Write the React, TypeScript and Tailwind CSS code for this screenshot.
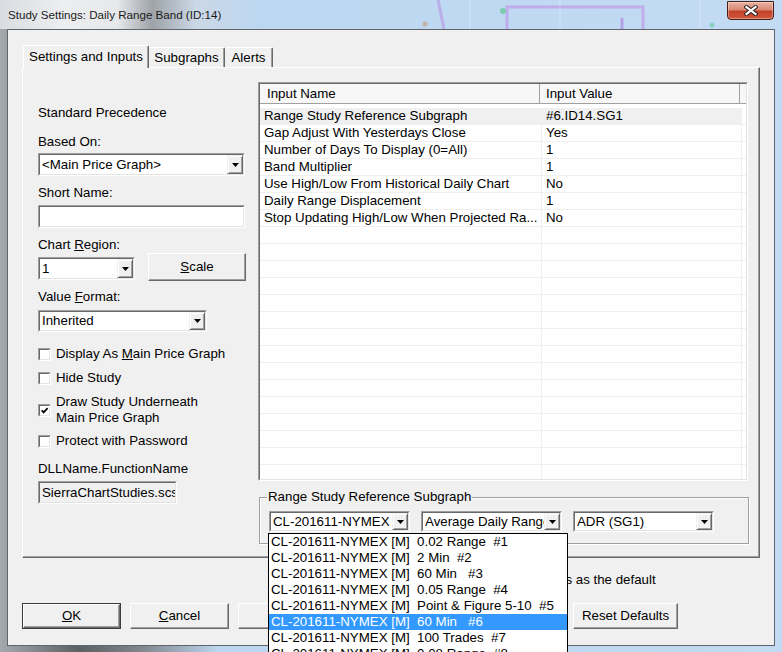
import React from "react";

const FONT = "font-['Liberation_Sans',Arial,sans-serif]";

function Arrow() {
  return (
    <svg width="7" height="4" viewBox="0 0 7 4">
      <polygon points="0,0 7,0 3.5,4" fill="#000" />
    </svg>
  );
}

function Sunken({
  className = "",
  inner = "",
  children,
}: {
  className?: string;
  inner?: string;
  children?: React.ReactNode;
}) {
  return (
    <div
      className={`border border-t-[#a0a0a0] border-l-[#a0a0a0] border-r-white border-b-white ${className}`}
    >
      <div
        className={`h-full w-full border border-t-[#696969] border-l-[#696969] border-r-[#e3e3e3] border-b-[#e3e3e3] ${inner}`}
      >
        {children}
      </div>
    </div>
  );
}

function Combo({ className, text }: { className: string; text: string }) {
  return (
    <Sunken className={`shrink-0 ${className}`} inner="bg-white flex items-stretch">
      <div className="flex-1 min-w-0 overflow-hidden whitespace-nowrap pl-[2px] flex items-center">
        {text}
      </div>
      <div className="w-[16px] shrink-0 flex items-center justify-center bg-[#f0f0f0] border border-t-[#f0f0f0] border-l-[#f0f0f0] border-r-[#696969] border-b-[#696969] shadow-[inset_1px_1px_0_white,inset_-1px_-1px_0_#a0a0a0]">
        <Arrow />
      </div>
    </Sunken>
  );
}

function Check({ checked }: { checked?: boolean }) {
  return (
    <Sunken className="w-[13px] h-[13px] shrink-0" inner="bg-white flex items-center justify-center">
      {checked && (
        <svg width="7" height="7" viewBox="0 0 7 7">
          <path d="M0.6 3.2 L2.6 5.4 L6.6 1.2" fill="none" stroke="#000" strokeWidth="1.7" />
        </svg>
      )}
    </Sunken>
  );
}

function CheckRow({ checked, children }: { checked?: boolean; children: React.ReactNode }) {
  return (
    <div className="flex items-center gap-[5px]">
      <Check checked={checked} />
      <div className="leading-[16px]">{children}</div>
    </div>
  );
}

function Btn({
  className,
  def,
  children,
}: {
  className: string;
  def?: boolean;
  children?: React.ReactNode;
}) {
  const face = (
    <div className="h-full w-full bg-[#f0f0f0] border border-t-white border-l-white border-r-[#696969] border-b-[#696969] shadow-[inset_-1px_-1px_0_#a0a0a0] flex items-center justify-center">
      {children}
    </div>
  );
  return (
    <div className={`shrink-0 ${className} ${def ? "border border-[#3c3c3c]" : ""}`}>{face}</div>
  );
}

const U = ({ c }: { c: string }) => <span className="underline">{c}</span>;

const rows: [string, string][] = [
  ["Range Study Reference Subgraph", "#6.ID14.SG1"],
  ["Gap Adjust With Yesterdays Close", "Yes"],
  ["Number of Days To Display (0=All)", "1"],
  ["Band Multiplier", "1"],
  ["Use High/Low From Historical Daily Chart", "No"],
  ["Daily Range Displacement", "1"],
  ["Stop Updating High/Low When Projected Ra...", "No"],
];
const allRows: [string, string][] = [
  ...rows,
  ...Array.from({ length: 15 }, () => ["", ""] as [string, string]),
];

const listItems = [
  "0.02 Range  #1",
  "2 Min  #2",
  "60 Min   #3",
  "0.05 Range  #4",
  "Point & Figure 5-10  #5",
  "60 Min   #6",
  "100 Trades  #7",
  "0.08 Range  #8",
];

export default function App() {
  return (
    <div
      className={`relative w-[782px] h-[652px] overflow-hidden text-[13.3px] text-black ${FONT} bg-[linear-gradient(90deg,#a3a9af_0%,#5c6065_10%,#80868c_18%,#bcd6ef_28%,#c2daf2_100%)]`}
    >
      {/* Title bar */}
      <div className="relative h-[29px] flex items-start justify-between pl-[8px] pr-[8px] bg-[linear-gradient(90deg,#d9dde1_0%,#eceef0_8%,#e6e8eb_15%,#9ea3a8_19.5%,#cbd8e6_25%,#bcd7f1_33%,#c3dbf3_100%)]">
        <svg className="absolute left-0 top-0" width="782" height="29">
          <path d="M507 29 V7 H643 V29" fill="none" stroke="#c27fe6" strokeWidth="3" opacity="0.5" />
          <path d="M438 0 L444 29" stroke="#b46fe0" strokeWidth="3" opacity="0.4" />
          <path d="M622 18 V29" stroke="#a65fd8" strokeWidth="3" opacity="0.45" />
          <circle cx="503" cy="11" r="3" fill="#39c06a" opacity="0.5" />
          <circle cx="425" cy="24" r="2.5" fill="#c0905a" opacity="0.5" />
          <circle cx="712" cy="25" r="2.5" fill="#39c06a" opacity="0.4" />
          <path d="M470 0 V29 M560 0 V29 M700 0 V29" stroke="#ffffff" strokeWidth="1" opacity="0.35" />
        </svg>
        <span className="relative mt-[7px] text-[11.6px] leading-[16px] text-[#1a1a1a]">
          Study Settings: Daily Range Band (ID:14)
        </span>
        <div className="relative mt-[1px] w-[47px] h-[19px] rounded-b-[4px] border border-[#4a1d14] bg-[linear-gradient(180deg,#eab3a3_0%,#d98873_45%,#c2412a_55%,#d0583c_100%)] shadow-[inset_0_0_0_1px_rgba(255,255,255,0.35)] flex items-center justify-center">
          <svg width="14" height="11" viewBox="0 0 14 11">
            <path d="M2.5 2 L11.5 9 M11.5 2 L2.5 9" stroke="#3a2a28" strokeWidth="4.2" strokeLinecap="square" />
            <path d="M2.5 2 L11.5 9 M11.5 2 L2.5 9" stroke="#ffffff" strokeWidth="2.2" strokeLinecap="square" />
          </svg>
        </div>
      </div>

      {/* Client area */}
      <div className="ml-[7px] w-[768px] h-[617px] bg-[#f0f0f0] border border-[#5f656b]">
        <div className="pl-[14px] flex flex-col">
          {/* Tabs */}
          <div className="flex items-end h-[22px] mt-[15px] ml-[1px]">
            <div className="relative z-10 -mb-px h-[23px] w-[126px] bg-[#f0f0f0] border-t border-l border-r border-t-white border-l-white border-r-[#696969] rounded-t-[2px] shadow-[inset_-1px_0_0_#a0a0a0] flex items-center justify-center">
              Settings and Inputs
            </div>
            <div className="h-[20px] w-[76px] border-t border-r border-t-white border-r-[#696969] rounded-t-[2px] shadow-[inset_-1px_0_0_#a0a0a0] flex items-center justify-center">
              Subgraphs
            </div>
            <div className="h-[20px] w-[48px] border-t border-r border-t-white border-r-[#696969] rounded-t-[2px] shadow-[inset_-1px_0_0_#a0a0a0] flex items-center justify-center">
              Alerts
            </div>
          </div>

          {/* Tab panel */}
          <div className="w-[738px] h-[491px] border border-t-white border-l-white border-r-[#696969] border-b-[#696969] shadow-[inset_-1px_-1px_0_#a0a0a0] flex">
            {/* Left column */}
            <div className="w-[235px] shrink-0 pl-[15px] flex flex-col">
              <div className="mt-[37px] leading-[16px]">Standard Precedence</div>
              <div className="mt-[13px] leading-[16px]">Based On:</div>
              <Combo className="mt-[3px] w-[207px] h-[23px]" text="<Main Price Graph>" />
              <div className="mt-[9px] leading-[16px]">Short Name:</div>
              <Sunken className="mt-[4px] w-[207px] h-[23px]" inner="bg-white" />
              <div className="mt-[9px] leading-[16px]">
                Chart <U c="R" />egion:
              </div>
              <div className="flex h-[28px]">
                <Combo className="mt-[4px] w-[97px] h-[23px]" text="1" />
                <Btn className="ml-[13px] w-[98px] h-[28px]">
                  <span>
                    <U c="S" />
                    cale
                  </span>
                </Btn>
              </div>
              <div className="mt-[8px] leading-[16px]">
                Value <U c="F" />ormat:
              </div>
              <Combo className="mt-[5px] w-[169px] h-[22px]" text="Inherited" />
              <div className="mt-[14px]">
                <CheckRow>
                  Display As <U c="M" />ain Price Graph
                </CheckRow>
              </div>
              <div className="mt-[8px]">
                <CheckRow>Hide Study</CheckRow>
              </div>
              <div className="mt-[8px]">
                <CheckRow checked>
                  Draw Study Underneath
                  <br />
                  Main Price Graph
                </CheckRow>
              </div>
              <div className="mt-[7px]">
                <CheckRow>Protect with Password</CheckRow>
              </div>
              <div className="mt-[12px] leading-[16px]">DLLName.FunctionName</div>
              <Sunken
                className="mt-[4px] w-[139px] h-[23px]"
                inner="bg-[#f0f0f0] overflow-hidden whitespace-nowrap pl-[2px] flex items-center"
              >
                SierraChartStudies.scsf_DailyRangeBand
              </Sunken>
            </div>

            {/* Right column */}
            <div className="w-[490px] shrink-0 flex flex-col">
              <Sunken className="mt-[14px] h-[399px] w-[490px]" inner="bg-white overflow-hidden flex flex-col">
                <div className="h-[20px] shrink-0 flex bg-[#f7f7f7] border-b border-[#a0a0a0]">
                  <div className="w-[280px] shrink-0 border-r border-[#a0a0a0] pl-[7px] pt-[2px] leading-[16px]">
                    Input Name
                  </div>
                  <div className="w-[200px] shrink-0 border-r border-[#a0a0a0] pl-[6px] pt-[2px] leading-[16px]">
                    Input Value
                  </div>
                  <div className="flex-1" />
                </div>
                <div className="pt-[4px] flex flex-col">
                  {allRows.map(([name, value], i) => (
                    <div key={i} className="h-[17px] shrink-0 flex">
                      <div
                        className={`w-[282px] shrink-0 border-b border-r border-[#f0f0f0] pl-[4px] leading-[15px] whitespace-nowrap overflow-hidden ${
                          i === 0 ? "bg-[#f0f0f0]" : ""
                        }`}
                      >
                        {name}
                      </div>
                      <div
                        className={`w-[200px] shrink-0 border-b border-r border-[#f0f0f0] pl-[4px] leading-[15px] whitespace-nowrap overflow-hidden ${
                          i === 0 ? "bg-[#f0f0f0]" : ""
                        }`}
                      >
                        {value}
                      </div>
                      <div className="flex-1 border-b border-[#f0f0f0]" />
                    </div>
                  ))}
                </div>
              </Sunken>

              {/* Group box */}
              <div className="relative mt-[16px] ml-[1px] w-[490px] h-[47px] border border-[#a0a0a0] shadow-[1px_1px_0_white,inset_1px_1px_0_white]">
                <span className="absolute -top-[9px] left-[7px] px-[1px] bg-[#f0f0f0] leading-[16px]">
                  Range Study Reference Subgraph
                </span>
                <div className="flex mt-[13px] ml-[9px]">
                  <Combo className="w-[141px] h-[21px]" text="CL-201611-NYMEX [M]  60 Min   #6" />
                  <Combo className="ml-[11px] w-[141px] h-[21px]" text="Average Daily Range" />
                  <Combo className="ml-[11px] w-[141px] h-[21px]" text="ADR (SG1)" />
                </div>
              </div>
            </div>
          </div>

          {/* Save as default */}
          <div className="mt-[14px] pl-[416px] h-[16px]">
            <CheckRow>Save these settings as the default</CheckRow>
          </div>

          {/* Buttons */}
          <div className="mt-[15px] flex h-[26px]">
            <Btn def className="w-[99px] h-[26px]">
              <span>
                <U c="O" />K
              </span>
            </Btn>
            <Btn className="ml-[9px] w-[99px] h-[26px]">
              <span>
                <U c="C" />
                ancel
              </span>
            </Btn>
            <Btn className="ml-[9px] w-[99px] h-[26px]" />
            <Btn className="ml-[236px] w-[105px] h-[26px]">Reset Defaults</Btn>
          </div>
        </div>
      </div>

      {/* Open drop-down list */}
      <div className="absolute left-[268px] top-[533px] w-[300px] h-[130px] bg-white border border-[#000] flex flex-col">
        {listItems.map((it, i) => (
          <div
            key={i}
            className={`h-[16px] shrink-0 leading-[16px] pl-[2px] whitespace-pre ${
              i === 5 ? "bg-[#3399ff] text-white" : ""
            }`}
          >
            {"CL-201611-NYMEX [M]  " + it}
          </div>
        ))}
      </div>
    </div>
  );
}
